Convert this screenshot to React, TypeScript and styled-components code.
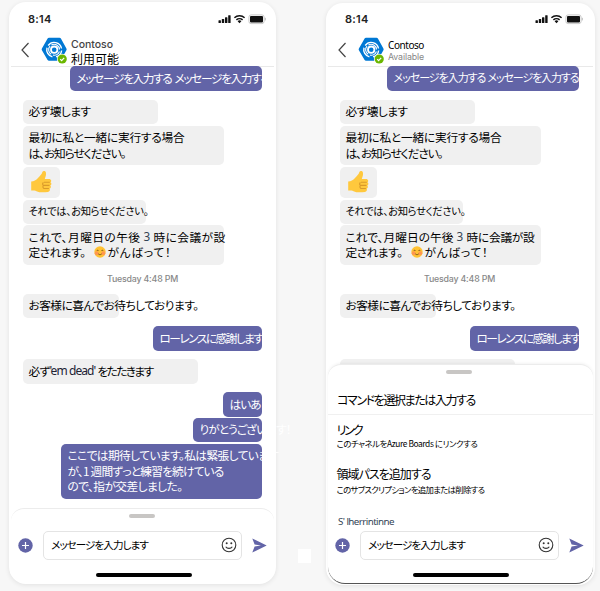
import React, { useLayoutEffect, useRef, useState } from "react";
import styled, { createGlobalStyle, css } from "styled-components";

const GlobalStyle = createGlobalStyle`
  * { box-sizing: border-box; }
  body { margin: 0; background: #f7f7f7; overflow: hidden; }
`;

const jp = `"Noto Sans CJK JP", sans-serif`;
const purple = "#6264a7";

const Page = styled.div`
  width: 600px;
  height: 591px;
  padding-left: 9px;
  display: flex;
  align-items: flex-start;
  background: #f7f7f7;
  font-family: ${jp};
  color: #000;
`;

const Phone = styled.main<{ $top: number; $w: number; $h: number }>`
  flex: none;
  margin-top: ${(p) => p.$top}px;
  width: ${(p) => p.$w}px;
  height: ${(p) => p.$h}px;
  border-radius: 17px;
  background: #fff;
  box-shadow: 0 1px 5px rgba(0, 0, 0, 0.09);
  display: flex;
  flex-direction: column;
`;

const Spacer = styled.div`
  flex: none;
  width: 13px;
  height: 14px;
  margin: 549px 15px 0 22px;
  background: #fff;
`;

const StatusBar = styled.div<{ $top: number }>`
  flex: none;
  width: 267px;
  height: ${(p) => 30 - p.$top}px;
  padding: ${(p) => 12 - p.$top}px 9px 0 19px;
  display: flex;
  justify-content: space-between;
  align-items: flex-start;
`;

const Clock = styled.span`
  font: 600 11px/14px Inter, sans-serif;
  color: #222;
`;

const Header = styled.header`
  flex: none;
  height: 37px;
  margin: 0 2px;
  padding-left: 10px;
  border-bottom: 1px solid #e9e9e9;
  display: flex;
  align-items: flex-start;
`;

const Back = styled.svg`
  margin: 12px 12px 0 0;
`;

const Avatar = styled.svg`
  margin: 7px 3px 0 0;
`;

const Names = styled.div`
  display: flex;
  flex-direction: column;
  align-items: flex-start;
  padding-top: 7px;
`;

const FitText = styled.span<{ $size: number; $family?: string; $color?: string; $lh?: number; $weight?: number }>`
  display: block;
  white-space: pre;
  font-family: ${(p) => p.$family ?? jp};
  font-size: ${(p) => p.$size}px;
  font-weight: ${(p) => p.$weight ?? 400};
  line-height: ${(p) => p.$lh ?? 15.5}px;
  color: ${(p) => p.$color ?? "inherit"};
  font-feature-settings: "palt";
`;

interface FitProps {
  w: number;
  children: string;
  size?: number;
  family?: string;
  color?: string;
  lh?: number;
  weight?: number;
}

// Spreads or tightens a run of text so that it takes the given width.
function Fit({ w, children, size = 11.7, family, color, lh, weight }: FitProps) {
  const ref = useRef<HTMLSpanElement>(null);
  const [spacing, setSpacing] = useState(0);
  useLayoutEffect(() => {
    const el = ref.current;
    if (!el) return;
    el.style.letterSpacing = "0px";
    const next = (w - el.getBoundingClientRect().width) / children.length;
    el.style.letterSpacing = `${next}px`;
    setSpacing(next);
  }, [w, children, size]);
  return (
    <FitText ref={ref} $size={size} $family={family} $color={color} $lh={lh} $weight={weight} style={{ letterSpacing: spacing }}>
      {children}
    </FitText>
  );
}

const Chat = styled.section<{ $h: number; $clip?: boolean }>`
  flex: none;
  width: 267px;
  height: ${(p) => p.$h}px;
  margin-top: -1px;
  padding: 0 14px;
  display: flex;
  flex-direction: column;
  overflow: ${(p) => (p.$clip ? "hidden" : "visible")};
`;

const Bubble = styled.div<{ $w: number; $h: number; $mt?: number; $mine?: boolean }>`
  flex: none;
  width: ${(p) => p.$w}px;
  height: ${(p) => p.$h}px;
  margin-top: ${(p) => p.$mt ?? 0}px;
  padding: 0 0 1.5px 5.5px;
  border-radius: 5px;
  background: #f0f0f0;
  display: flex;
  flex-direction: column;
  justify-content: center;
  align-items: flex-start;
  ${(p) =>
    p.$mine &&
    css`
      align-self: flex-end;
      padding-left: 6.5px;
      background: ${purple};
      color: #fff;
    `}
`;

const Line = styled.div<{ $gap?: number }>`
  display: flex;
  align-items: center;
  gap: ${(p) => p.$gap ?? 0}px;
  height: 15.5px;
`;

const Emoji = styled.span`
  display: flex;
  margin: 1px 2px 0 8px;
`;

const DateMark = styled.div`
  flex: none;
  height: 29px;
  display: flex;
  justify-content: center;
  align-items: center;
`;

const Sheet = styled.section<{ $h: number; $dark?: boolean }>`
  flex: none;
  z-index: 1;
  height: ${(p) => p.$h}px;
  margin: 0 2px;
  border-radius: 13px 13px 17px 17px;
  border-top: 1px solid #ececec;
  border-bottom: 1px solid ${(p) => (p.$dark ? "#555" : "#fff")};
  box-shadow: ${(p) => (p.$dark ? "0 -1px 3px rgba(0,0,0,.05)" : "none")};
  background: #fff;
  display: flex;
  flex-direction: column;
`;

const Handle = styled.div`
  flex: none;
  width: 26px;
  height: 4px;
  margin: 5px 0 0 118px;
  border-radius: 2px;
  background: #c8c6c4;
`;

const Commands = styled.div`
  flex: none;
  height: 154px;
`;

const CommandTitle = styled.div`
  height: 41px;
  padding: 16px 0 0 9px;
  border-bottom: 1px solid #f0f0f0;
  display: flex;
  align-items: flex-start;
`;

const Command = styled.div<{ $mt: number; $indent?: number }>`
  height: 32px;
  margin-top: ${(p) => p.$mt}px;
  padding-left: ${(p) => p.$indent ?? 8.5}px;
  display: flex;
  flex-direction: column;
  align-items: flex-start;
`;

const Composer = styled.div<{ $mt: number }>`
  flex: none;
  height: 30px;
  margin-top: ${(p) => p.$mt}px;
  padding-left: 7px;
  display: flex;
  align-items: center;
`;

const InputBox = styled.div`
  width: 199px;
  height: 29px;
  margin: 0 10px;
  padding: 0 4px 0 7px;
  border: 1px solid #e4e4e4;
  border-radius: 5px;
  display: flex;
  align-items: center;
  justify-content: space-between;
`;

const HomeBar = styled.div`
  flex: none;
  width: 96px;
  height: 4px;
  margin: 13px 0 0 85px;
  border-radius: 2px;
  background: #000;
`;

const SystemIcons = () => (
  <svg width="50" height="14" viewBox="0 0 50 14">
    <g fill="#111">
      <rect x="1.500" y="8.300" width="2.400" height="2.700" rx=".5" />
      <rect x="4.800" y="6.900" width="2.400" height="4.100" rx=".5" />
      <rect x="8" y="5.200" width="2.400" height="5.800" rx=".5" />
      <rect x="11.200" y="3.200" width="2.400" height="7.800" rx=".5" />
      <path d="M22.500 11.300l-1.900-2.100a2.800 2.800 0 0 1 3.800 0z" />
      <rect x="33" y="4" width="13" height="6.500" rx="1" />
    </g>
    <g fill="none" stroke="#111" strokeWidth="1.500">
      <path d="M19.400 7.900a4.500 4.500 0 0 1 6.200 0M17.400 5.700a7.400 7.400 0 0 1 10.200 0" />
    </g>
    <rect x="31.900" y="2.900" width="15.200" height="8.700" rx="2.200" fill="none" stroke="#bbb" strokeWidth=".8" />
    <path d="M48.300 5.800v2.600" stroke="#bbb" />
  </svg>
);

const BackIcon = () => (
  <Back width="8" height="16" viewBox="0 0 8 16" fill="none" stroke="#444" strokeWidth="1.200">
    <path d="M7.500 1L1 8l6.500 7" />
  </Back>
);

const BotAvatar = () => (
  <Avatar width="27" height="28" viewBox="0 0 27 28">
    <path d="M8 .8h10.500a1.600 1.600 0 0 1 1.400.8l5.500 9.800a1.800 1.800 0 0 1 0 1.800l-5.500 9.800a1.600 1.600 0 0 1-1.400.8H8a1.600 1.600 0 0 1-1.400-.8L.9 13.200a1.800 1.800 0 0 1 0-1.800L6.600 1.600A1.600 1.600 0 0 1 8 .8z" fill="#0078d4" />
    <g fill="none" stroke="#fff">
      <circle cx="13.200" cy="12.700" r="3.200" strokeWidth="1.800" />
      <path d="M7.200 8.500a7.400 7.400 0 0 1 13.300 3M6 10.700a7.500 7.500 0 0 0 5.400 9.200M20.600 13.500a7.300 7.300 0 0 1-5.500 6.300" strokeWidth="1.400" />
      <path d="M9 9.100a5.400 5.400 0 0 0 1.200 8.200M10.400 8a5.400 5.400 0 0 1 8.100 4.500M18.400 14.500a5.400 5.400 0 0 1-6.500 3.500" strokeWidth="1.100" />
    </g>
    <circle cx="21.200" cy="22" r="5.300" fill="#fff" />
    <circle cx="21.200" cy="22" r="4.600" fill="#6bb700" />
    <path d="M19.200 22.200l1.400 1.400 2.600-2.700" fill="none" stroke="#fff" strokeWidth="1.200" />
  </Avatar>
);

const Thumb = () => (
  <svg width="24" height="24" viewBox="0 0 24 24">
    <path d="M2.200 11.500C5 11.500 7 10.200 9 8c2-2.200 3.700-3.600 4.400-6 .5-1.600 3-1.400 3.500.4.600 2.200-.6 4.600-1.100 6.600h4c2.800 0 3 2.700 1.600 3.300 1.500.8 1.200 3-.2 3.300 1.200.8.800 2.800-.5 3.100.7 1.300-.1 3-1.800 3.200-4.300.7-8.400.7-11.400-.7-1.700-.8-3.300-.7-5.300-.7z" fill="#ffc83d" />
    <path d="M15 12.200h5.800M14.500 15.400h6M14.700 18.500h5.200M14.500 12.500c-1.200.8-1.200 2 0 2.900-.9 1-.7 2.200.2 3" fill="none" stroke="#d99a2b" strokeWidth="1.100" />
  </svg>
);

const Blush = () => (
  <Emoji>
    <svg width="12" height="12" viewBox="0 0 12 12">
      <circle cx="6" cy="6" r="5.700" fill="#ffc233" />
      <circle cx="2.700" cy="7.200" r="1.900" fill="#ff9650" />
      <circle cx="9.300" cy="7.200" r="1.900" fill="#ff9650" />
      <path d="M2.600 5c.5-1 1.600-1 2 0M7.400 5c.4-1 1.500-1 2 0M4.200 7.800c1 1.200 2.600 1.200 3.600 0" fill="none" stroke="#754b16" strokeWidth=".8" />
    </svg>
  </Emoji>
);

const PlusIcon = () => (
  <svg width="15" height="15" viewBox="0 0 15 15">
    <circle cx="7.500" cy="7.500" r="7.200" fill={purple} />
    <path d="M7.500 4v7M4 7.500h7" stroke="#fff" strokeWidth="1.200" />
  </svg>
);

const Smile = () => (
  <svg width="16" height="16" viewBox="0 0 16 16">
    <circle cx="8" cy="8" r="6.800" fill="none" stroke="#333" strokeWidth="1.100" />
    <circle cx="5.700" cy="6.200" r="1" fill="#333" />
    <circle cx="10.300" cy="6.200" r="1" fill="#333" />
    <path d="M4.700 9.700c1.500 2.200 5.100 2.200 6.600 0" fill="none" stroke="#333" strokeWidth="1.100" />
  </svg>
);

const SendIcon = () => (
  <svg width="15" height="15" viewBox="0 0 15 15">
    <path d="M.3.500L14.700 7.500.3 14.500 2.600 8.600 9 7.500 2.600 6.400z" fill={purple} />
  </svg>
);

function TopBar({ top, children }: { top: number; children: React.ReactNode }) {
  return (
    <>
      <StatusBar $top={top}>
        <Clock>
          <Fit w={23.5} size={11} family="Inter, sans-serif" weight={600} lh={14}>8:14</Fit>
        </Clock>
        <SystemIcons />
      </StatusBar>
      <Header>
        <BackIcon />
        <BotAvatar />
        <Names>{children}</Names>
      </Header>
    </>
  );
}

function Thread({ second }: { second?: boolean }) {
  return (
    <>
      <Bubble $mine $w={192} $h={25}>
        <Line $gap={second ? 2 : 3}>
          <Fit w={second ? 92 : 95} size={second ? 11 : 11.7}>メッセージを入力する</Fit>
          <Fit w={second ? 91 : 95} size={second ? 11 : 11.7}>メッセージを入力する</Fit>
        </Line>
      </Bubble>
      <Bubble $w={135} $h={24} $mt={8.5}><Fit w={62}>必ず壊します</Fit></Bubble>
      <Bubble $w={201} $h={39.5} $mt={2}>
        <Line><Fit w={156}>最初に私と一緒に実行する場合</Fit></Line>
        <Line><Fit w={97}>は、お知らせください。</Fit></Line>
      </Bubble>
      <Bubble $w={37} $h={31} $mt={2}><Thumb /></Bubble>
      <Bubble $w={123} $h={24} $mt={1.5}><Fit w={120} size={10.3}>それでは、お知らせください。</Fit></Bubble>
      <Bubble $w={201} $h={39.5} $mt={1.5}>
        <Line $gap={3}>
          <Fit w={second ? 108 : 112}>これで、月曜日の午後</Fit>
          <Fit w={7} family='"Noto Sans", sans-serif' color="#345">3</Fit>
          <Fit w={second ? 68 : 72}>時に会議が設</Fit>
        </Line>
        <Line>
          <Fit w={57}>定されます。</Fit>
          <Blush />
          <Fit w={64}>がんばって！</Fit>
        </Line>
      </Bubble>
      <DateMark>
        <Fit w={71} size={8.8} family="Inter, sans-serif" color="#888" weight={500}>Tuesday 4:48 PM</Fit>
      </DateMark>
      <Bubble $w={96} $h={24}><Fit w={170}>お客様に喜んでお待ちしております。</Fit></Bubble>
      <Bubble $mine $w={109} $h={25} $mt={8}><Fit w={103}>ローレンスに感謝します</Fit></Bubble>
    </>
  );
}

function MessageBar({ mt }: { mt: number }) {
  return (
    <>
      <Composer $mt={mt}>
        <PlusIcon />
        <InputBox>
          <Fit w={97} size={10.6}>メッセージを入力します</Fit>
          <Smile />
        </InputBox>
        <SendIcon />
      </Composer>
      <HomeBar />
    </>
  );
}

export default function App() {
  return (
    <>
      <GlobalStyle />
      <Page>
        <Phone $top={2} $w={267} $h={582}>
          <TopBar top={2}>
            <Fit w={42} size={10.5} family="Inter, sans-serif" color="#444" weight={500} lh={15}>Contoso</Fit>
            <Fit w={48} size={12} lh={14}>利用可能</Fit>
          </TopBar>
          <Chat $h={442}>
            <Thread />
            <Bubble $w={175} $h={24.5} $mt={8.5}>
              <Line>
                <Fit w={21}>必ず</Fit>
                <Fit w={48} family='"Noto Sans", sans-serif' size={12} color="#223">'em dead' </Fit>
                <Fit w={55}>をたたきます</Fit>
              </Line>
            </Bubble>
            <Bubble $mine $w={39} $h={25} $mt={8}><Fit w={31}>はいあ</Fit></Bubble>
            <Bubble $mine $w={69} $h={24.5} $mt={1}><Fit w={91}>りがとうございます！</Fit></Bubble>
            <Bubble $mine $w={201} $h={55.5} $mt={1.5}>
              <Line><Fit w={211}>ここでは期待しています。私は緊張しています</Fit></Line>
              <Line><Fit w={156}>が、1 週間ずっと練習を続けている</Fit></Line>
              <Line><Fit w={115}>ので、指が交差しました。</Fit></Line>
            </Bubble>
          </Chat>
          <Sheet $h={75}>
            <Handle />
            <MessageBar mt={12} />
          </Sheet>
        </Phone>
        <Spacer />
        <Phone $top={3} $w={269} $h={582}>
          <TopBar top={3}>
            <Fit w={36} size={10} family='"Noto Sans", sans-serif' lh={16}>Contoso</Fit>
            <Fit w={36} size={8.8} family="Inter, sans-serif" color="#888" lh={8}>Available</Fit>
          </TopBar>
          <Chat $h={298} $clip>
            <Thread second />
            <Bubble $w={175} $h={24.5} $mt={8.5} />
          </Chat>
          <Sheet $h={220} $dark>
            <Handle />
            <Commands>
              <CommandTitle>
                <Fit w={138} size={12} lh={20}>コマンドを選択または入力する</Fit>
              </CommandTitle>
              <Command $mt={7}>
                <Fit w={25} size={12} lh={15}>リンク</Fit>
                <Fit w={141} size={8.4} lh={13}>このチャネルをAzure Boards にリンクする</Fit>
              </Command>
              <Command $mt={12}>
                <Fit w={94} size={12} lh={16}>領域パスを追加する</Fit>
                <Fit w={148} size={8.4} lh={14}>このサブスクリプションを追加または削除する</Fit>
              </Command>
              <Command $mt={17} $indent={10}>
                <Fit w={56} size={9.8} family='"Noto Sans", sans-serif' color="#345" lh={13}>S' lherrintinne</Fit>
              </Command>
            </Commands>
            <MessageBar mt={2} />
          </Sheet>
        </Phone>
      </Page>
    </>
  );
}
